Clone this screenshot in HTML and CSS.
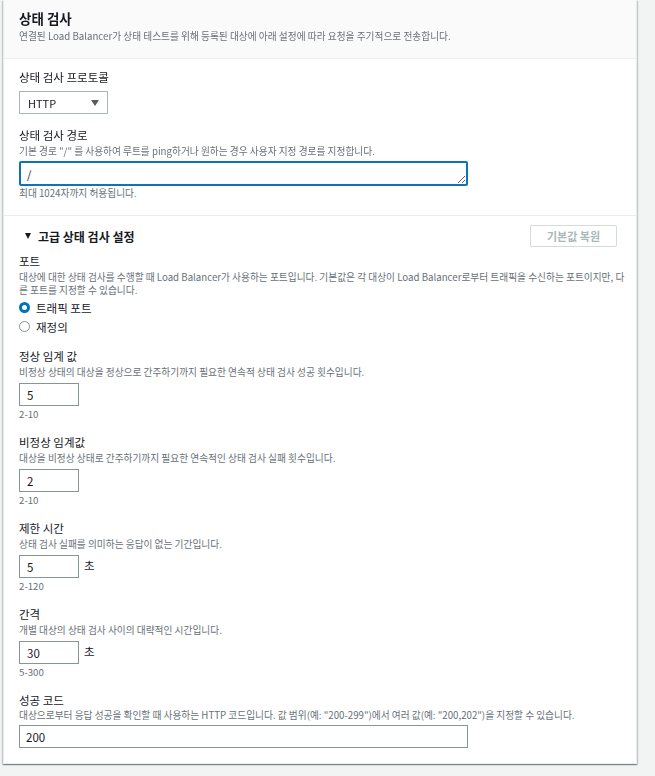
FILE: index.html
```html
<!doctype html>
<html>
<head>
	<meta charset="utf-8">
	<title>상태 검사</title>
	<link rel="stylesheet" href="styles.css">
</head>
<body>
	<!-- 상태 검사 패널 -->
	<div class="panel">
		<div class="panel-head">
			<h2>상태 검사</h2>
			<p class="desc">연결된 Load Balancer가 상태 테스트를 위해 등록된 대상에 아래 설정에 따라 요청을 주기적으로 전송합니다.</p>
		</div>

		<!-- 기본 설정 -->
		<div class="panel-body">
			<div class="field">
				<label class="label">상태 검사 프로토콜</label>
				<div class="select"><span>HTTP</span><i class="caret"></i></div>
			</div>
			<div class="field">
				<label class="label">상태 검사 경로</label>
				<p class="desc">기본 경로 "/" 를 사용하여 루트를 ping하거나 원하는 경우 사용자 지정 경로를 지정합니다.</p>
				<textarea class="path" rows="1">/</textarea>
				<p class="hint">최대 1024자까지 허용됩니다.</p>
			</div>
		</div>

		<!-- 고급 설정 -->
		<div class="panel-body advanced">
			<div class="adv-head">
				<span class="toggle"><i class="tri"></i>고급 상태 검사 설정</span>
				<button class="btn" disabled>기본값 복원</button>
			</div>

			<div class="field port">
				<label class="label">포트</label>
				<p class="desc">대상에 대한 상태 검사를 수행할 때 Load Balancer가 사용하는 포트입니다. 기본값은 각 대상이 Load Balancer로부터 트래픽을 수신하는 포트이지만, 다른 포트를 지정할 수 있습니다.</p>
				<div class="radios">
					<label class="radio"><i class="dot checked"></i>트래픽 포트</label>
					<label class="radio"><i class="dot"></i>재정의</label>
				</div>
			</div>

			<div class="field">
				<label class="label">정상 임계 값</label>
				<p class="desc">비정상 상태의 대상을 정상으로 간주하기까지 필요한 연속적 상태 검사 성공 횟수입니다.</p>
				<div class="num-row"><input class="num" value="5"></div>
				<p class="hint">2-10</p>
			</div>

			<div class="field">
				<label class="label">비정상 임계값</label>
				<p class="desc">대상을 비정상 상태로 간주하기까지 필요한 연속적인 상태 검사 실패 횟수입니다.</p>
				<div class="num-row"><input class="num" value="2"></div>
				<p class="hint">2-10</p>
			</div>

			<div class="field">
				<label class="label">제한 시간</label>
				<p class="desc">상태 검사 실패를 의미하는 응답이 없는 기간입니다.</p>
				<div class="num-row"><input class="num" value="5"><span class="unit">초</span></div>
				<p class="hint">2-120</p>
			</div>

			<div class="field">
				<label class="label">간격</label>
				<p class="desc">개별 대상의 상태 검사 사이의 대략적인 시간입니다.</p>
				<div class="num-row"><input class="num" value="30"><span class="unit">초</span></div>
				<p class="hint">5-300</p>
			</div>

			<div class="field last">
				<label class="label">성공 코드</label>
				<p class="desc">대상으로부터 응답 성공을 확인할 때 사용하는 HTTP 코드입니다. 값 범위(예: "200-299")에서 여러 값(예: "200,202")을 지정할 수 있습니다.</p>
				<input class="text" value="200">
			</div>
		</div>
	</div>
</body>
</html>
```

FILE: styles.css
```css
body,h2,p{margin:0px;padding:0px;}
body{
	background-color:#f2f3f3;
	font-family:"Noto Sans CJK KR","Noto Sans",sans-serif;
	color:#16191f;
}
/* 패널 */
.panel{
	margin:0 18px 12px 3px;
	background-color:#fff;
	border:1px solid #eaeded;
	border-top:none;
	box-shadow:0 1px 1px 0 rgba(0,28,36,0.3),1px 1px 1px 0 rgba(0,28,36,0.15),-1px 1px 1px 0 rgba(0,28,36,0.15);
}
.panel-head{
	background-color:#fafafa;
	padding:9px 15px 15px;
	border-bottom:1px solid #eaeded;
}
.panel-head h2{
	font-size:13.5px;
	line-height:18px;
	font-weight:bold;
}
.panel-head .desc{margin-top:3px;}

.panel-body{padding:10px 10px 15px 15px;}
.advanced{
	border-top:1px solid #eaeded;
	padding-top:9px;
}

/* 공통 텍스트 */
.label{
	display:block;
	font-size:11.5px;
	line-height:16px;
}
.desc{
	font-size:9.7px;
	line-height:13px;
	color:#687078;
}
.hint{
	font-size:9.7px;
	line-height:13px;
	color:#687078;
	margin-top:2px;
}
.field + .field{margin-top:13px;}
.field .label + .desc{margin-top:2px;}

/* 셀렉트 */
.select{
	margin-top:6px;
	width:89px;
	height:23px;
	box-sizing:border-box;
	border:1px solid #aab7b8;
	display:flex;
	align-items:center;
	justify-content:space-between;
	padding:0 8px 0 8px;
	font-size:11px;
}
.caret{
	width:0;
	height:0;
	border-left:4px solid transparent;
	border-right:4px solid transparent;
	border-top:6px solid #545b64;
}

/* 경로 입력 */
.path{
	display:block;
	margin-top:3px;
	width:449px;
	height:25px;
	box-sizing:border-box;
	border:2px solid #0f73ba;
	border-radius:2px;
	padding:3px 6px;
	font-family:inherit;
	font-size:11px;
	line-height:16px;
	color:#16191f;
	outline:none;
}
.path + .hint{margin-top:1px;}

/* 고급 설정 헤더 */
.adv-head{
	display:flex;
	align-items:center;
	justify-content:space-between;
	height:22px;
}
.toggle{
	display:flex;
	align-items:center;
	padding-left:6px;
	font-size:12px;
	font-weight:bold;
}
.tri{
	width:0;
	height:0;
	border-left:3.5px solid transparent;
	border-right:3.5px solid transparent;
	border-top:6px solid #16191f;
	margin-right:7px;
}
.btn{
	margin-right:9px;
	width:87px;
	height:22px;
	background-color:#fff;
	border:1px solid #d5dbdb;
	border-radius:2px;
	font-family:inherit;
	font-size:11px;
	font-weight:bold;
	color:#aab7b8;
	padding:0;
}

/* 포트 */
.field.port{margin-top:6px;}
.radios{margin-top:1px;}
.radio{
	display:flex;
	align-items:center;
	height:19px;
	font-size:11.5px;
}
.dot{
	width:11px;
	height:11px;
	box-sizing:border-box;
	border:1px solid #879596;
	border-radius:50%;
	margin-right:6px;
	background-color:#fff;
}
.dot.checked{border:3.5px solid #0073bb;}
.field.port + .field{margin-top:12px;}

/* 숫자 입력 */
.num-row{
	display:flex;
	align-items:center;
	margin-top:4px;
}
.num,.text{
	height:23px;
	box-sizing:border-box;
	border:1px solid #879596;
	padding:0 7px;
	font-family:inherit;
	font-size:11.5px;
	color:#16191f;
	outline:none;
}
.num{width:60px;}
.unit{
	font-size:11.5px;
	margin-left:5px;
	margin-top:-3px;
}
.text{
	display:block;
	width:449px;
	margin-top:3px;
	padding-left:6px;
}
.field.last .desc{margin-top:1px;}
```
